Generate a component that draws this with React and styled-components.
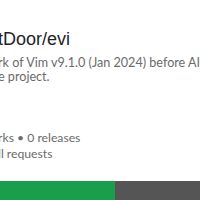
import React from "react";
import styled, { createGlobalStyle } from "styled-components";

const Global = createGlobalStyle`
  html, body { margin: 0; padding: 0; background: #ffffff; }
  #root { width: 200px; height: 200px; overflow: hidden; }
`;

const Card = styled.div`
  width: 200px;
  height: 200px;
  display: flex;
  flex-direction: column;
  overflow: hidden;
  background: #ffffff;
  font-family: Lato, "Liberation Sans", sans-serif;
`;

const Body = styled.div`
  display: flex;
  flex-direction: column;
  padding-top: 28px;
  margin-left: ${(p) => p.$shift}px;
  flex: 1;
`;

const Title = styled.h1`
  margin: 0;
  font-family: "Liberation Sans", Arial, sans-serif;
  font-weight: 400;
  font-size: 18px;
  line-height: 22px;
  color: #1f2328;
  white-space: nowrap;
`;

const Description = styled.p`
  margin: 6px 0 0;
  font-size: 12.6px;
  line-height: 14px;
  color: #6b6b6b;
  white-space: nowrap;
`;

const Stats = styled.div`
  margin-top: auto;
  margin-bottom: 19px;
  font-size: 12.2px;
  line-height: 16px;
  color: #6b6b6b;
  white-space: nowrap;
`;

const LangBar = styled.div`
  display: flex;
  height: 19px;
  flex-shrink: 0;
`;

const LangSegment = styled.div`
  flex: 0 0 ${(p) => p.$pct}%;
  background: ${(p) => p.$color};
`;

const languages = [
  { name: "Vim Script", color: "#199f4b", pct: 57.5 },
  { name: "C", color: "#555555", pct: 42.5 },
];

export default function App() {
  return (
    <>
      <Global />
      <Card>
        <Body $shift={-2}>
          <Title>tDoor/evi</Title>
          <Description>
            rk of Vim v9.1.0 (Jan 2024) before AI
            <br />
            e project.
          </Description>
          <Stats>
            rks • 0 releases
            <br />
            ll requests
          </Stats>
        </Body>
        <LangBar>
          {languages.map((l) => (
            <LangSegment key={l.name} $color={l.color} $pct={l.pct} title={l.name} />
          ))}
        </LangBar>
      </Card>
    </>
  );
}
